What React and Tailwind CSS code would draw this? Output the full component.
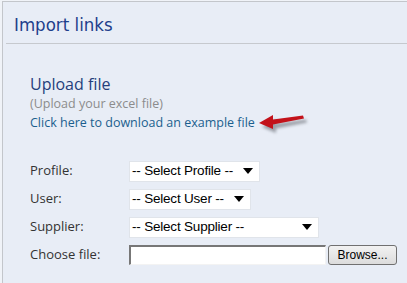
import { useState } from "react";

const Select = ({ label, width, value }) => (
  <div className="flex items-center h-[28px]">
    <span className="w-[99px] text-[13px] text-[#333]">{label}</span>
    <div
      className="flex items-center justify-between h-[21px] bg-white border border-[#e0e4ea] pl-[2px] pr-[6px] text-[13.5px] text-black"
      style={{ width }}
    >
      <span className="tracking-[-0.2px]" style={{ fontFamily: '"Liberation Sans", Arial, sans-serif' }}>
        {value}
      </span>
      <svg width="10" height="6" viewBox="0 0 10 6">
        <path d="M0 0h10L5 6z" fill="#000" />
      </svg>
    </div>
  </div>
);

export default function App() {
  const [file] = useState("");

  return (
    <div
      className="w-[407px] h-[283px] overflow-hidden bg-[#f0f3f8] pt-[1px] pl-[2px]"
      style={{ fontFamily: '"Open Sans", "Noto Sans", sans-serif' }}
    >
      <div className="h-full bg-[#e8edf6] border-t border-l border-[#c3c6cb]">
        {/* HEADER */}
        <div className="ml-[3px] h-[42px] border-b border-[#c6c9ce] pl-[8px] flex items-center">
          <h1
            className="text-[18.5px] text-[#1e3f8c] pt-[4px]"
            style={{ fontFamily: '"DejaVu Sans Condensed", "DejaVu Sans", sans-serif' }}
          >
            Import links
          </h1>
        </div>

        {/* UPLOAD */}
        <div className="relative pl-[27px] pt-[30px]">
          <p className="text-[16px] leading-[20px] text-[#25407c]">Upload file</p>
          <p className="text-[12.5px] leading-[19px] text-[#8c8c8c]">(Upload your excel file)</p>
          <a href="#" className="block text-[12.5px] leading-[19px] text-[#1b5f8e]">
            Click here to download an example file
          </a>
          <svg
            className="absolute left-[254px] top-[66px]"
            width="56"
            height="28"
            viewBox="0 0 56 28"
          >
            <defs>
              <filter id="sh" x="-30%" y="-60%" width="160%" height="220%">
                <feGaussianBlur stdDeviation="1.6" />
              </filter>
            </defs>
            <path
              d="M2 13L16 5L16 9.5L46 5.5L47 8.5L16 14.5L16 19Z"
              transform="translate(3 4)"
              fill="#5d6168"
              opacity="0.55"
              filter="url(#sh)"
            />
            <path d="M2 13L16 5L16 9.5L46 5.5L47 8.5L16 14.5L16 19Z" fill="#c3121a" />
          </svg>
        </div>

        {/* FORM */}
        <div className="pl-[27px] pt-[25px] flex flex-col">
          <Select label="Profile:" width={131} value="-- Select Profile --" />
          <Select label="User:" width={122} value="-- Select User --" />
          <Select label="Supplier:" width={190} value="-- Select Supplier --" />
          <div className="flex items-center h-[28px]">
            <span className="w-[99px] text-[13px] text-[#333]">Choose file:</span>
            <input
              readOnly
              value={file}
              className="w-[197px] h-[20px] bg-white border-t-2 border-l-2 border-[#777] border-r border-b border-r-[#f3f3f3] border-b-[#f3f3f3] outline-none"
            />
            <button
              className="ml-[2px] w-[69px] h-[20px] rounded-[3px] border border-[#707070] bg-gradient-to-b from-[#f2f2f2] to-[#dcdcdc] text-[12px] text-black"
              style={{ fontFamily: '"Liberation Sans", Arial, sans-serif' }}
            >
              Browse...
            </button>
          </div>
        </div>
      </div>
    </div>
  );
}
